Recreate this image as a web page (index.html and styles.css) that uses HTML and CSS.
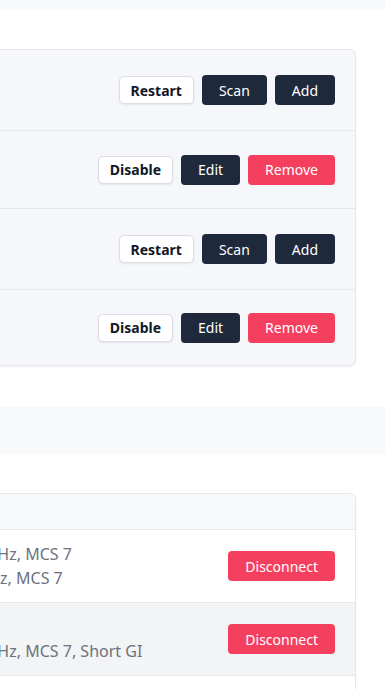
FILE: index.html
```html
<!DOCTYPE html>
<html lang="en">
<head>
    <meta charset="UTF-8">
    <meta name="viewport" content="width=device-width, initial-scale=1.0">
    <title>Wireless Overview</title>
    <link rel="stylesheet" href="styles.css">
</head>
<body>

<div class="topbar"></div>

<!-- Radios and their networks -->
<div class="card radios">
    <div class="radio-row">
        <div class="actions">
            <button class="btn btn-light">Restart</button>
            <button class="btn btn-dark">Scan</button>
            <button class="btn btn-dark">Add</button>
        </div>
    </div>
    <div class="radio-row net-row">
        <div class="actions">
            <button class="btn btn-light">Disable</button>
            <button class="btn btn-dark">Edit</button>
            <button class="btn btn-danger">Remove</button>
        </div>
    </div>
    <div class="radio-row">
        <div class="actions">
            <button class="btn btn-light">Restart</button>
            <button class="btn btn-dark">Scan</button>
            <button class="btn btn-dark">Add</button>
        </div>
    </div>
    <div class="radio-row net-row">
        <div class="actions">
            <button class="btn btn-light">Disable</button>
            <button class="btn btn-dark">Edit</button>
            <button class="btn btn-danger">Remove</button>
        </div>
    </div>
</div>

<div class="section-bar"></div>

<!-- Associated stations -->
<div class="card stations">
    <div class="stations-head"></div>
    <div class="station-row">
        <div class="rate">144.4 Mbit/s, 40 MHz, MCS 7<br>72.2 Mbit/s, 20 MHz, MCS 7</div>
        <button class="btn btn-danger">Disconnect</button>
    </div>
    <div class="station-row">
        <div class="rate">6.0 Mbit/s<br>144.4 Mbit/s, 40 MHz, MCS 7, Short GI</div>
        <button class="btn btn-danger">Disconnect</button>
    </div>
    <div class="station-row">
        <div class="rate">1.0 Mbit/s<br>1.0 Mbit/s</div>
        <button class="btn btn-danger">Disconnect</button>
    </div>
</div>

</body>
</html>
```

FILE: styles.css
```css
html {
    overflow: hidden;
}
body {
    font-family: 'Noto Sans', 'Open Sans', sans-serif;
    background: #fff;
    margin: 0;
    padding: 0;
    color: #111827;
}
.topbar {
    height: 10px;
    background-color: #f8f9fb;
}
.card {
    margin: 0 29px 0 -162px;
    border: 1px solid #e5e7eb;
    border-radius: 6px;
    box-shadow: 0 1px 2px rgba(0, 0, 0, 0.05);
    overflow: hidden;
}
.radios {
    margin-top: 39px;
    background-color: #f5f7fa;
}
.radio-row {
    height: 81px;
    box-sizing: border-box;
    padding: 0 20px;
    display: flex;
    justify-content: flex-end;
    align-items: center;
    border-bottom: 1px solid #e5e7eb;
}
.net-row {
    height: 78px;
}
.radio-row:last-child {
    border-bottom: none;
    height: 75px;
}
.actions {
    display: flex;
    align-items: center;
    gap: 8px;
}
.btn {
    font-family: inherit;
    font-size: 14px;
    height: 30px;
    padding: 0 17px;
    border: none;
    border-radius: 4px;
    color: #fff;
    cursor: pointer;
}
.btn-light {
    height: 28px;
    padding: 0 11px;
    background-color: #fff;
    color: #111827;
    font-weight: 700;
    border: 1px solid #dadde3;
    border-radius: 5px;
    box-shadow: 0 1px 2px rgba(0, 0, 0, 0.08);
}
.btn-dark {
    background-color: #1e293b;
}
.btn-danger {
    background-color: #f43f5e;
}
.section-bar {
    height: 47px;
    margin-top: 41px;
    background-color: #f8f9fb;
}
.stations {
    margin-top: 39px;
    background-color: #fff;
}
.stations-head {
    height: 35px;
    background-color: #f8f9fb;
    border-bottom: 1px solid #e5e7eb;
}
.station-row {
    display: flex;
    justify-content: space-between;
    align-items: center;
    padding: 12px 20px;
    border-bottom: 1px solid #e5e7eb;
}
.station-row:nth-child(odd) {
    background-color: #f3f4f6;
}
.rate {
    font-size: 16px;
    line-height: 24px;
    color: #6b7280;
}
```
